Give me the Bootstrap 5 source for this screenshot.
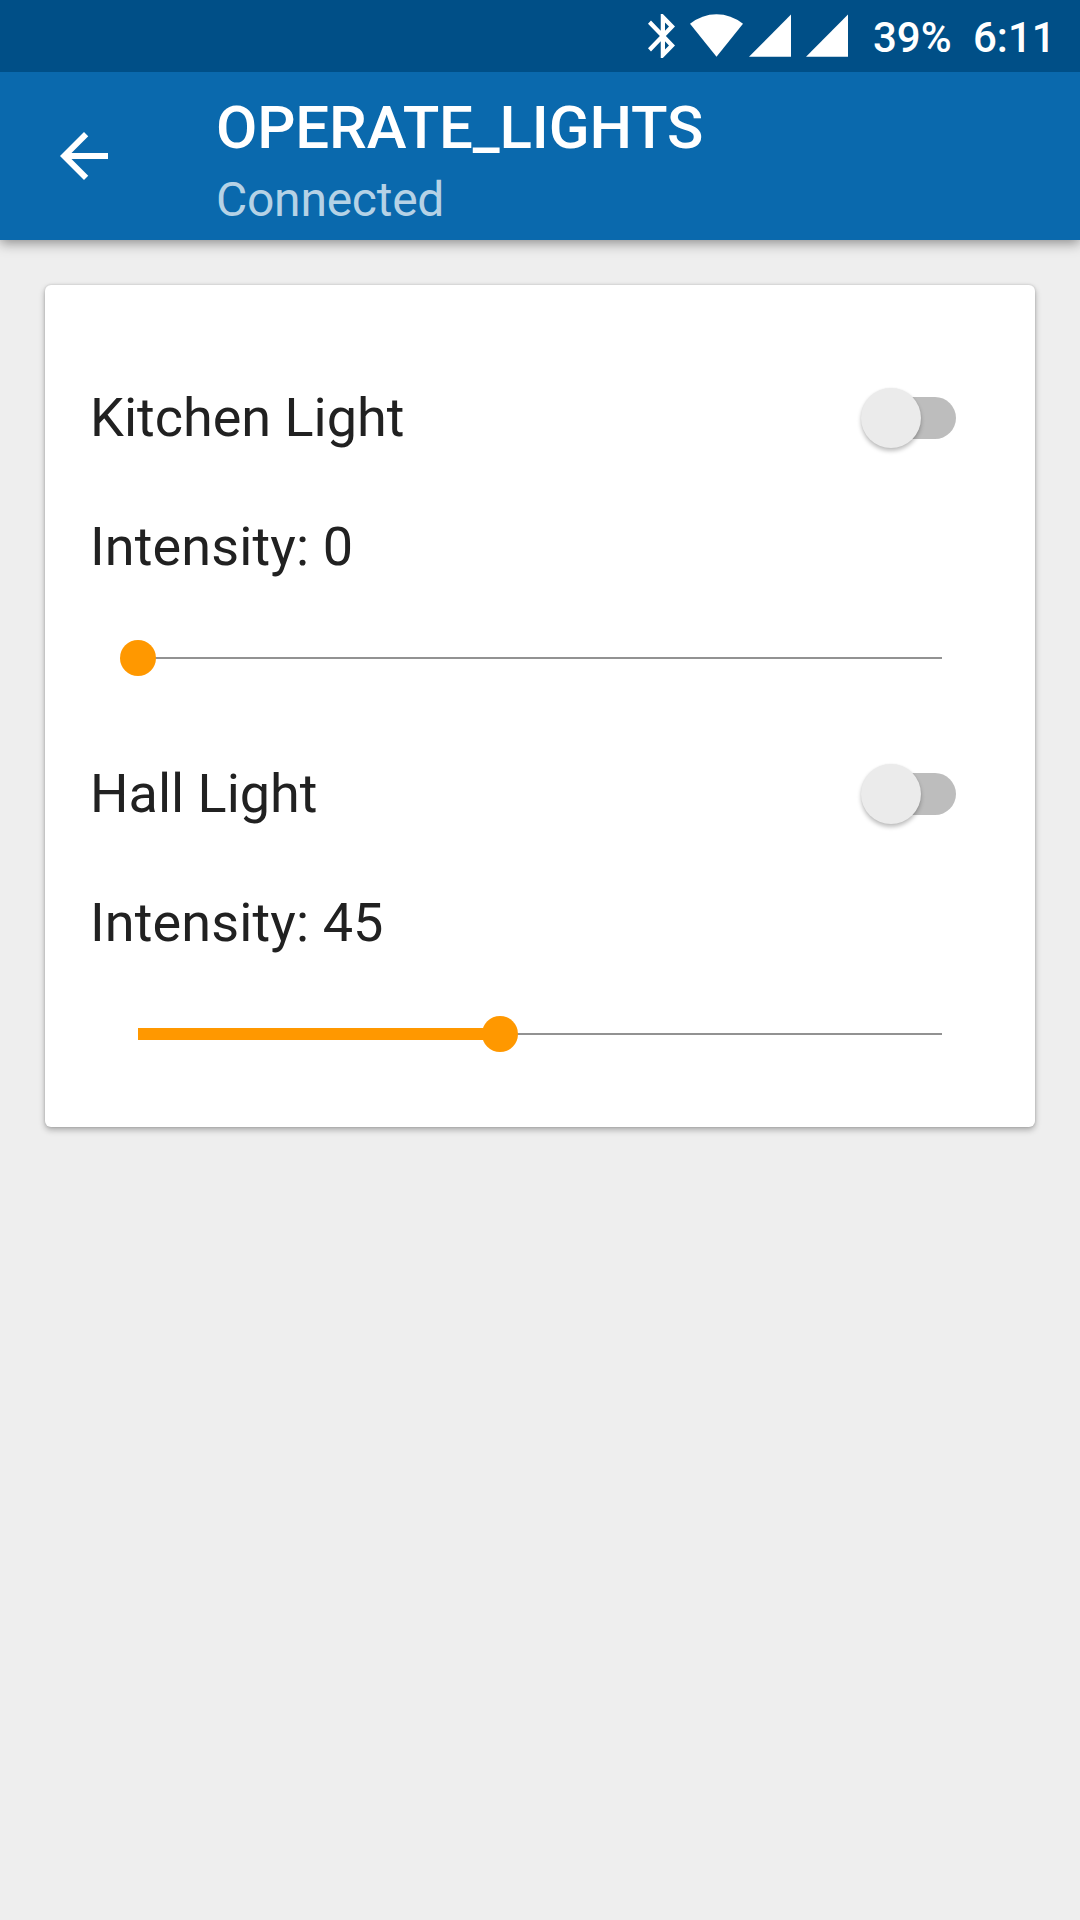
<!DOCTYPE html>
<html lang="en">
<head>
<meta charset="utf-8">
<meta name="viewport" content="width=device-width, initial-scale=1">
<title>Operate Lights</title>
<link href="https://cdn.jsdelivr.net/npm/bootstrap@5.3.0/dist/css/bootstrap.min.css" rel="stylesheet">
<style>
  body { font-family: Roboto, "Liberation Sans", sans-serif; background: #eee; color: #212121; min-height: 1920px; overflow-x: hidden; }
  .status-bar { height: 72px; background: #004f87; color: #fff; padding-left: 648px; font-size: 42px; line-height: 50px; font-weight: 500; position: relative; z-index: 2; }
  .status-bar svg { display: block; flex: none; }
  .status-icons { padding-top: 14px; }
  .icon-wifi { margin-left: 15px; }
  .icon-sim-one { margin-left: 6px; }
  .icon-sim-two { margin-left: 15px; }
  .battery-level { margin-left: 25px; padding-top: 13px; width: 100px; }
  .clock { padding-top: 13px; }
  .app-bar { height: 168px; background: #0a69ad; color: #fff; padding: 0 48px; box-shadow: 0 3px 12px rgba(0,0,0,.42); position: relative; z-index: 1; }
  .back-btn { line-height: 0; margin-right: 96px; }
  .screen-title { font-size: 60px; line-height: 70px; font-weight: 500; letter-spacing: -.14px; margin: 0; padding-top: 21px; }
  .screen-subtitle { font-size: 48px; line-height: 56px; letter-spacing: -.25px; color: #b5d2e6; padding-top: 9px; }
  .lights-card { margin: 45px 45px 0; height: 842px; padding: 101px 79px 0 45px; border: 0; border-radius: 6px; box-shadow: 0 3px 6px rgba(0,0,0,.28), 0 0 3px rgba(0,0,0,.16); font-size: 54px; line-height: 64px; }
  .light-group { height: 376px; }
  .intensity { margin-top: 65px; letter-spacing: .12px; }
  .toggle { width: 96px; height: 61px; position: relative; }
  .toggle-track { width: 82px; height: 42px; background: #bdbdbd; border-radius: 21px; }
  .toggle-thumb { left: .5px; top: .5px; width: 60px; height: 60px; background: #ebebeb; border-radius: 50%; box-shadow: 0 3px 4px rgba(0,0,0,.25), 0 0 2px rgba(0,0,0,.06); }
  .slider { margin: 61px 14px 0 48px; height: 36px; }
  .slider-line { height: 2px; background: #929292; }
  .slider-fill { left: 0; top: 12px; height: 12px; background: #ff9800; }
  .slider-thumb { top: 0; width: 36px; height: 36px; margin-left: -18px; border-radius: 50%; background: #ff9800; }
</style>
</head>
<body>
<header>
  <div class="status-bar d-flex">
    <div class="status-icons d-flex">
      <svg width="27" height="44" viewBox="5 2 12.71 20" preserveAspectRatio="none" fill="#fff"><path d="M17.71 7.71L12 2h-1v7.59L6.41 5 5 6.41 10.59 12 5 17.59 6.41 19 11 14.41V22h1l5.71-5.71-4.3-4.29 4.3-4.29zM13 5.83l1.88 1.88L13 9.59V5.83zm1.88 10.46L13 18.17v-3.76l1.88 1.88z"/></svg>
      <svg class="icon-wifi" width="53" height="43" viewBox="0 0 53 43" fill="#fff"><path d="M26.5 42.7L0 9.8Q12 .2 26.5.2T53 9.8Z"/></svg>
      <svg class="icon-sim-one" width="42" height="43" viewBox="0 0 42 43" fill="#fff"><path d="M42 .5V42.8H0Z"/></svg>
      <svg class="icon-sim-two" width="42" height="43" viewBox="0 0 42 43" fill="#fff"><path d="M42 .5V42.8H0Z"/></svg>
    </div>
    <div class="battery-level">39%</div>
    <div class="clock">6:11</div>
  </div>
  <nav class="app-bar d-flex">
    <a href="#" class="back-btn align-self-center" aria-label="Back"><svg width="72" height="72" viewBox="0 0 24 24" fill="#fff"><path d="M20 11H7.83l5.59-5.59L12 4l-8 8 8 8 1.41-1.41L7.83 13H20v-2z"/></svg></a>
    <div>
      <h1 class="screen-title">OPERATE_LIGHTS</h1>
      <div class="screen-subtitle">Connected</div>
    </div>
  </nav>
</header>
<main class="card lights-card">
  <section class="light-group flex-shrink-0">
    <div class="d-flex justify-content-between align-items-center">
      <span>Kitchen Light</span>
      <div class="toggle d-flex align-items-center justify-content-end" role="switch" aria-checked="false">
        <div class="toggle-track"></div><div class="toggle-thumb position-absolute"></div>
      </div>
    </div>
    <div class="intensity">Intensity: 0</div>
    <div class="slider position-relative d-flex align-items-center">
      <div class="slider-line w-100"></div>
      <div class="slider-thumb position-absolute" style="left:0%"></div>
    </div>
  </section>
  <section class="light-group flex-shrink-0">
    <div class="d-flex justify-content-between align-items-center">
      <span>Hall Light</span>
      <div class="toggle d-flex align-items-center justify-content-end" role="switch" aria-checked="false">
        <div class="toggle-track"></div><div class="toggle-thumb position-absolute"></div>
      </div>
    </div>
    <div class="intensity">Intensity: 45</div>
    <div class="slider position-relative d-flex align-items-center">
      <div class="slider-line w-100"></div>
      <div class="slider-fill position-absolute" style="width:45%"></div>
      <div class="slider-thumb position-absolute" style="left:45%"></div>
    </div>
  </section>
</main>
<script src="https://cdn.jsdelivr.net/npm/bootstrap@5.3.0/dist/js/bootstrap.bundle.min.js"></script>
</body>
</html>
